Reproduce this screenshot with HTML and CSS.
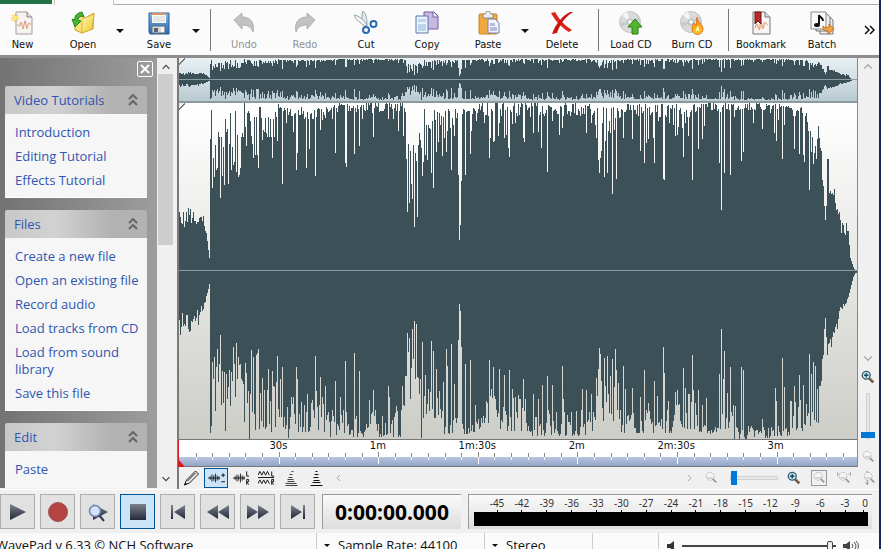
FILE: index.html
```html
<!DOCTYPE html>
<html lang="en">
<head>
<meta charset="utf-8">
<title>WavePad</title>
<link rel="stylesheet" href="styles.css">
</head>
<body>
<svg class="defs" aria-hidden="true">
  <defs>
    <linearGradient id="dark" x1="0" y1="0" x2="0" y2="1"><stop offset="0" stop-color="#7b808b"/><stop offset="1" stop-color="#23293a"/></linearGradient>
    <linearGradient id="gold" x1="0" y1="0" x2="1" y2="1"><stop offset="0" stop-color="#fffbb8"/><stop offset="1" stop-color="#eec42c"/></linearGradient>
    <linearGradient id="steel" x1="0" y1="0" x2="0" y2="1"><stop offset="0" stop-color="#7db4e8"/><stop offset="1" stop-color="#2b66b4"/></linearGradient>
    <linearGradient id="flame" x1="0" y1="0" x2="0" y2="1"><stop offset="0" stop-color="#ee8419"/><stop offset="1" stop-color="#ffc928"/></linearGradient>
    <symbol id="disc" viewBox="0 0 24 24"><circle cx="11" cy="11" r="10.5" fill="#d9dbda" stroke="#c2c4c4"/><path d="M11 11 3 4a11 11 0 0 1 5-3zM11 11l8 7a11 11 0 0 1-6 3z" fill="#f5f6f6"/><path d="M11 11 20 6l1 4zM11 11l-9 5-1-4z" fill="#c4c9c9"/><circle cx="11" cy="11" r="3.5" fill="#bfc2c2"/><circle cx="11" cy="11" r="1.8" fill="#fff"/></symbol>
    <symbol id="zoomin" viewBox="0 0 16 16"><path d="m9 9 5 5" stroke="#5d4b3c" stroke-width="3"/><path d="m10 9 4 4" stroke="#b99a70"/><circle cx="6" cy="6" r="4.5" fill="#c8e8f5" stroke="#3c596c" stroke-width="1.5"/><path d="M3.500 6h5M6 3.500v5" stroke="#19455e" stroke-width="1.5"/></symbol>
    <symbol id="zoomout" viewBox="0 0 16 16"><circle cx="7" cy="6" r="4.500" fill="#f4f4f4" stroke="#aaa" stroke-dasharray="2 1"/><path d="M4 8h6" stroke="#aaa"/><path d="m10 9 4 4" stroke="#999" stroke-width="2"/></symbol>
    <symbol id="wave" viewBox="0 0 14 12"><path d="M0 6h14M2.500 4v4M4.500 2v8M6.500 3v6M8.500 1v10M10.500 3v6M12.500 4v4" stroke="#111" fill="none"/></symbol>
  </defs>
</svg>
<div class="app">
  <header class="tabs"><span class="tab-file"></span><span class="tab-active"></span><span class="tab-rest"></span></header>

  <nav class="toolbar" aria-label="Main">
    <button class="tool first"><svg viewBox="0 0 24 24"><path d="M5 1h11l5 5v17H5z" fill="#f6f3f1" stroke="#a49d98"/><path d="M16 1v5h5" fill="#ddd" stroke="#888"/><path d="M6 14c2-1 2 3 3 0s1-5 2 0 1 5 2 0 1-6 2 0 1 4 2 0 2-1 3 0" fill="none" stroke="#d99370"/><path d="M4 3v8M0 7h8M1 4l6 6M7 4l-6 6" stroke="#efba2d"/><circle cx="4" cy="7" r="2" fill="#fff06a"/></svg>New</button>
    <button class="tool lead"><svg viewBox="0 0 24 24"><path d="M4 8 12 5l2 2 9-5-1 16-11 4-7-3z" fill="url(#gold)" stroke="#cba42b"/><path d="M11 8 23 3l-2 15-10 4z" fill="url(#gold)" stroke="#dbb43a"/><path d="M11 1C6 2 3 5 4 9L1 8l3 8 6-6-3-1c0-3 3-5 6-3z" fill="#46b62f" stroke="#29801f"/></svg>Open</button>
    <button class="drop" aria-label="Open options"></button>
    <button class="tool after"><svg viewBox="0 0 24 24"><path d="M2 2h20v21H3l-1-2z" fill="url(#steel)" stroke="#275e9f"/><path d="M5 2h14v10H5z" fill="#fbfbf8"/><path d="M5 2h14v2H5z" fill="#dd945e"/><path d="M6 6h12M6 8h12M6 10h12" stroke="#cdd1d4"/><path d="M5 15h13v7H5z" fill="#d7dad9" stroke="#5d6c78"/><path d="M7 17h4v4H7z" fill="#59636a"/><path d="M14 16h3v5h-3z" fill="#f5f6f5"/></svg>Save</button>
    <button class="drop" aria-label="Save options"></button>
    <span class="sep wide"></span>
    <button class="tool undo" disabled><svg viewBox="0 0 24 24"><path d="m2 9 8-7v4c8 0 13 5 11 15-2-5-5-7-11-7v4z" fill="#c2c2c2" stroke="#b0b0b0"/></svg>Undo</button>
    <button class="tool" disabled><svg viewBox="0 0 24 24"><path d="m22 9-8-7v4C6 6 1 11 3 21c2-5 5-7 11-7v4z" fill="#c2c2c2" stroke="#b0b0b0"/></svg>Redo</button>
    <button class="tool"><svg viewBox="0 0 24 24"><path d="M9 0c4 4 4 9 4 15l-2-1C8 10 7 5 9 0z" fill="#e4eaed" stroke="#91a1a9"/><path d="M0 4c4 0 10 5 13 10l-2 1C6 12 2 9 0 4z" fill="#f3f5f6" stroke="#91a1a9"/><circle cx="12" cy="19" r="3" fill="none" stroke="#286bb5" stroke-width="2"/><circle cx="19.500" cy="13" r="3" fill="none" stroke="#286bb5" stroke-width="2"/></svg>Cut</button>
    <button class="tool"><svg viewBox="0 0 24 24"><path d="M9 1h10l4 4v13H9z" fill="#c8b9e2" stroke="#6f5fa0"/><path d="M18 1v5h5" fill="#f4f0fb" stroke="#6f5fa0"/><path d="M1 5h12v17H1z" fill="#edf3fc" stroke="#5877ac"/><path d="M3 8h8v3H3zM3 13h8v7H3z" fill="#bdd4ed"/></svg>Copy</button>
    <button class="tool"><svg viewBox="0 0 24 24"><rect x="3" y="3" width="18" height="20" rx="1" fill="#efa93e" stroke="#c88429"/><path d="M7 3h2l2-3h2l2 3h2v4H7z" fill="#eee" stroke="#8b8b84"/><path d="M12 8h7l4 4v10H12z" fill="#f5f5ff" stroke="#7680ab"/><path d="M14 12h5v3h-5zM14 16h7v4h-7z" fill="#b7bbdf"/></svg>Paste</button>
    <button class="drop" aria-label="Paste options"></button>
    <button class="tool"><svg viewBox="0 0 24 24"><path d="M1 2 5 1c4 7 10 14 17 18l-3 2C12 17 6 11 1 2z" fill="#e22219"/><path d="M23 1C15 6 10 13 7 22l-5 1C5 14 12 5 20 1z" fill="#cc140e"/></svg>Delete</button>
    <span class="sep"></span>
    <button class="tool next"><svg viewBox="0 0 24 24"><use href="#disc"/><path d="m16 8 7 8h-4v7h-6v-7H9z" fill="#53b62a" stroke="#2c7d17"/></svg>Load CD</button>
    <button class="tool"><svg viewBox="0 0 24 24"><use href="#disc"/><path d="M17 6c0 5 6 7 6 12a5.500 5.500 0 0 1-11 0c0-3 1-5 2-6l2 3c1-3 0-6 1-9z" fill="url(#flame)" stroke="#de781c"/><path d="M18 14c0 2 2 3 1 6h-3c-1-2 1-3 2-6z" fill="#fff09a"/></svg>Burn CD</button>
    <span class="sep"></span>
    <button class="tool next"><svg viewBox="0 0 24 24"><path d="M4 1h12l5 5v17H4z" fill="#f7f6f5" stroke="#777"/><path d="M16 1v5h5" fill="#ddd" stroke="#777"/><path d="M6 17c2-6 2-5 3-1s2 4 2-1 2-4 2 0 2 3 2-1 2-2 4 0" fill="none" stroke="#e48650"/><path d="M6 1h6v12l-3-3-3 3z" fill="#b82d27" stroke="#6d1714"/></svg>Bookmark</button>
    <button class="tool"><svg viewBox="0 0 24 24"><path d="M10 6h10l3 3v14H10z" fill="#eee" stroke="#777"/><path d="M6 3h11l3 3v14H6z" fill="#eee" stroke="#777"/><path d="M1 1h15v17H1z" fill="#fafafa" stroke="#888"/><path d="M9 13V4c1 3 4 2 4 6" fill="none" stroke="#111" stroke-width="2"/><ellipse cx="7" cy="14" rx="3" ry="2" fill="#111"/><path d="M13 15c0 4 2 5 5 5v3l6-5-5-5v3c-2 1-4 1-6-1z" fill="#f3a248" stroke="#c66b20"/></svg>Batch</button>
    <button class="more" aria-label="More tools"><svg viewBox="0 0 12 10"><path d="m1 1 4 4-4 4M6 1l4 4-4 4" fill="none" stroke="#111" stroke-width="1.500"/></svg></button>
  </nav>

  <main class="work">
    <aside class="side">
      <div class="panels">
        <button class="close" aria-label="Close"><svg viewBox="0 0 10 10"><path d="m1 1 8 8M9 1 1 9" stroke="#fff" stroke-width="2"/></svg></button>
        <section><h2>Video Tutorials<svg viewBox="0 0 10 12"><path d="m1 5 4-4 4 4M1 11l4-4 4 4" /></svg></h2>
          <ul><li><a href="#">Introduction</a></li><li><a href="#">Editing Tutorial</a></li><li><a href="#">Effects Tutorial</a></li></ul></section>
        <section><h2>Files<svg viewBox="0 0 10 12"><path d="m1 5 4-4 4 4M1 11l4-4 4 4" /></svg></h2>
          <ul><li><a href="#">Create a new file</a></li><li><a href="#">Open an existing file</a></li><li><a href="#">Record audio</a></li><li><a href="#">Load tracks from CD</a></li><li><a href="#">Load from sound library</a></li><li><a href="#">Save this file</a></li></ul></section>
        <section><h2>Edit<svg viewBox="0 0 10 12"><path d="m1 5 4-4 4 4M1 11l4-4 4 4" /></svg></h2>
          <ul><li><a href="#">Paste</a></li></ul></section>
      </div>
      <div class="scroll"><svg viewBox="0 0 8 6"><path d="m1 5 3-3 3 3"/></svg><span class="thumb"></span><svg viewBox="0 0 8 6"><path d="m1 1 3 3 3-3"/></svg></div>
    </aside>

    <section class="editor">
      <div class="canvas">
        <div class="overview"><svg id="overview" viewBox="0 0 678 42" preserveAspectRatio="none"></svg><i class="corner"></i></div>
        <div class="track"><svg id="track" viewBox="0 0 678 336" preserveAspectRatio="none"></svg><i class="corner"></i></div>
        <div class="ruler">
          <div class="labels"><span>30s</span><span>1m</span><span>1m:30s</span><span>2m</span><span>2m:30s</span><span>3m</span></div>
          <svg id="ticks" viewBox="0 0 678 14" preserveAspectRatio="none"></svg>
          <i class="cursor"></i>
        </div>
      </div>
      <div class="vbar">
        <svg class="arrow" viewBox="0 0 8 6"><path d="m1 5 3-3 3 3"/></svg>
        <svg class="arrow down" viewBox="0 0 8 6"><path d="m1 1 3 3 3-3"/></svg>
        <button class="mini" aria-label="Zoom in vertically"><svg viewBox="0 0 16 16"><use href="#zoomin"/></svg></button>
        <input class="vslide" type="range" value="0" aria-label="Vertical zoom">
        <button class="mini" aria-label="Zoom out vertically"><svg viewBox="0 0 16 16"><use href="#zoomout"/></svg></button>
      </div>
      <div class="viewbar">
        <button class="view" aria-label="Edit tool"><svg viewBox="0 0 16 16"><path d="m1 15 2-5 9-9 3 3-9 9z" fill="#e9e9e9" stroke="#222"/><path d="m4 11 8-8M1 15l2-1-1-1z" stroke="#222"/></svg></button>
        <button class="view on" aria-label="Mixed waveform"><svg viewBox="0 0 18 14"><use href="#wave" y="1" width="13" height="12"/><path d="M14 4h4M16 2v4M14 11h4" stroke="#111"/></svg></button>
        <button class="view" aria-label="Left and right"><svg viewBox="0 0 18 16"><use href="#wave" y="2" width="13" height="12"/><path d="M14.500 1v5H17M14.500 15V9.500h2v2.500h-2l2 3" fill="none" stroke="#111"/></svg></button>
        <button class="view" aria-label="Split channels"><svg viewBox="0 0 18 16"><path d="m0 5 2-4 2 4 2-4 2 4 2-4 2 4M0 14l2-4 2 4 2-4 2 4 2-4 2 4M0 7.500h17M14.500 1v5H17M14.500 15V9.500h2v2.500h-2l2 3" fill="none" stroke="#111"/></svg></button>
        <button class="view" aria-label="Spectral view"><svg viewBox="0 0 14 16"><path d="M7 1.500h2M5 4.500h3M4 7.500h4M3 9.500h6M3 11.500h7M1 13.500h11M1 15.500h12" stroke="#444"/></svg></button>
        <button class="view" aria-label="Frequency view"><svg viewBox="0 0 14 16"><path d="M6 1.500h2M5 4.500h4M4 7.500h5M4 10.500h6M3 12.500h8M1 15.500h12" stroke="#111"/></svg></button>
        <svg class="arrow left" viewBox="0 0 6 8"><path d="M5 1 2 4l3 3"/></svg>
        <svg class="arrow right" viewBox="0 0 6 8"><path d="m1 1 3 3-3 3"/></svg>
        <button class="mini" aria-label="Zoom out"><svg viewBox="0 0 16 16"><use href="#zoomout"/></svg></button>
        <input class="hslide" type="range" value="0" aria-label="Horizontal zoom">
        <button class="mini" aria-label="Zoom in"><svg viewBox="0 0 16 16"><use href="#zoomin"/></svg></button>
        <button class="mini boxed" aria-label="Zoom to selection"><svg viewBox="0 0 16 16"><use href="#zoomout"/></svg></button>
        <button class="mini" aria-label="Full width"><svg viewBox="0 0 16 16"><path d="M.5 1v5M15.500 1v5M0 3.500h3M13 3.500h3" stroke="#aaa"/><use href="#zoomout"/></svg></button>
        <button class="mini" aria-label="Full height"><svg viewBox="0 0 16 16"><path d="M6 0v16M4 3l2-2 2 2M4 13l2 2 2-2" fill="none" stroke="#888"/><use href="#zoomout"/></svg></button>
      </div>
    </section>
  </main>

  <section class="transport">
    <button class="play" aria-label="Play"><svg viewBox="0 0 24 24"><path d="m4 4 16 8-16 8z"/></svg></button>
    <button class="play" aria-label="Record"><svg viewBox="0 0 24 24"><circle cx="12" cy="12" r="9.500" fill="#b34441" stroke="#9b5553"/></svg></button>
    <button class="play" aria-label="Scrub"><svg viewBox="0 0 24 24"><path d="m7 4 15 8-15 8z"/><path d="m13 15 5 6" stroke="#30384b" stroke-width="2"/><circle cx="9" cy="11" r="5.500" fill="#d4e1fa" stroke="#7182ae" stroke-width="1.500"/></svg></button>
    <button class="play active" aria-label="Stop"><svg viewBox="0 0 24 24"><path d="M4 4h16v16H4z"/></svg></button>
    <button class="play" aria-label="Go to start"><svg viewBox="0 0 24 24"><path d="M5 5h2v14H5zM19 5v14L8 12z"/></svg></button>
    <button class="play" aria-label="Rewind"><svg viewBox="0 0 24 24"><path d="M12 5v14L1 12zM23 5v14l-11-7z"/></svg></button>
    <button class="play" aria-label="Fast forward"><svg viewBox="0 0 24 24"><path d="m1 5 11 7-11 7zM12 5l11 7-11 7z"/></svg></button>
    <button class="play" aria-label="Go to end"><svg viewBox="0 0 24 24"><path d="m5 5 11 7-11 7zM17 5h2v14h-2z"/></svg></button>
    <output class="time">0:00:00.000</output>
    <div class="meter">
      <div class="db"><span>-45</span><span>-42</span><span>-39</span><span>-36</span><span>-33</span><span>-30</span><span>-27</span><span>-24</span><span>-21</span><span>-18</span><span>-15</span><span>-12</span><span>-9</span><span>-6</span><span>-3</span><span>0</span></div>
      <div class="level"></div>
    </div>
  </section>

  <footer class="status">
    <span class="product">WavePad v 6.33 © NCH Software</span>
    <button class="pick rate">Sample Rate: 44100</button>
    <button class="pick chan">Stereo</button>
    <span class="blank"></span>
    <div class="volume">
      <svg viewBox="0 0 10 10"><path d="M1 3h3l4-3v10L4 7H1z" fill="#333"/></svg>
      <input type="range" value="98" aria-label="Volume">
      <svg class="loud" viewBox="0 0 18 12"><path d="M1 4h3l4-3v10L4 8H1z" fill="#444"/><path d="M10 4q2 2 0 4M12 2q4 4 0 8M14 1q5 5 0 10" fill="none" stroke="#555"/></svg>
    </div>
  </footer>
</div>
<script src="wave.js"></script>
</body>
</html>
```
FILE: styles.css
```css
* { box-sizing: border-box; }
body { margin: 0; height: 100vh; overflow: hidden; font-family: "Noto Sans", sans-serif; font-size: 12px; color: #111; background: #f0f0f0; }
button { font: inherit; color: inherit; border: 0; padding: 0; background: none; }
svg { display: block; }
.defs { position: absolute; width: 0; height: 0; }
.app { height: calc(100vh + 9px); display: flex; flex-direction: column; border-right: 2px solid #142a5c; }

.tabs { display: flex; height: 5px; background: #fbfbfb; }
.tab-file { width: 52px; margin-bottom: 1px; background: #217346; }
.tab-active { width: 60px; margin-left: 2px; border: solid #c4c4c4; border-width: 0 1px; }
.tab-rest { flex: 1; border-bottom: 1px solid #a9a9a9; }

.toolbar { display: flex; gap: 1px; height: 50px; background: #fbfbfb; }
.tool { flex: none; width: 60px; display: flex; flex-direction: column; align-items: center; gap: 2px; padding-top: 6px; font-family: "DejaVu Sans Condensed", "Noto Sans", sans-serif; font-size: 11px; line-height: 16px; white-space: nowrap; }
.tool svg { width: 24px; height: 24px; }
.tool:disabled { color: #929292; }
.first { width: 45px; }
.lead { margin-left: 7px; }
.after, .undo { margin-left: 2px; }
.next { margin-left: 1px; }
.drop { width: 12px; display: grid; place-items: center; padding-top: 2px; }
.drop::before { content: ""; border: 4px solid transparent; border-top-color: #111; border-bottom: 0; }
.sep { width: 1px; margin: 4px 0 4px 5px; background: #777; }
.sep.wide { margin-left: 7px; }
.more { margin-left: auto; padding-right: 3px; }
.more svg { width: 12px; height: 10px; }

.work { flex: 1; min-height: 0; display: flex; border-top: 3px solid #8e8e8e; }
.side { width: 174px; display: flex; overflow: hidden; margin-bottom: 1px; }
.panels { flex: 1; display: flex; flex-direction: column; gap: 12px; padding: 3px 10px 0 5px; background: linear-gradient(90deg, #737373, #9d9d9d); overflow: hidden; }
.close { align-self: flex-end; flex: none; width: 16px; height: 16px; margin: 0 -6px -3px 0; border: 1px solid #fff; border-radius: 2px; display: grid; place-items: center; }
.close svg { width: 10px; height: 10px; }
.panels section { font-family: "Open Sans", "Noto Sans", sans-serif; font-size: 13px; }
.panels h2 { margin: 0; height: 28px; padding: 0 9px; display: flex; align-items: center; justify-content: space-between; font-size: 13px; font-weight: 400; color: #2f55b0; background: linear-gradient(90deg, #c8c8c8, #d2d2d2 35%, #b2b2b2 75%); border-radius: 2px 2px 0 0; }
.panels h2 svg { width: 10px; height: 12px; fill: none; stroke: #666; stroke-width: 2; }
.panels ul { margin: 0; padding: 10px 0 8px 10px; list-style: none; display: flex; flex-direction: column; gap: 7px; background: #f6f6f6; line-height: 17px; border-bottom: 1px solid #fff; }
.panels section:last-child ul { height: 60px; }
.panels a { color: #2f55b0; text-decoration: none; }
.scroll { width: 17px; padding: 5px 1px; display: flex; flex-direction: column; align-items: center; background: #f0f0f0; }
.scroll svg { width: 10px; height: 7px; fill: none; stroke: #444; stroke-width: 1; }
.scroll .thumb { width: 15px; height: 171px; margin: 4px 0 auto; background: #cdcdcd; }

.editor { flex: 1; min-width: 0; margin-left: 3px; display: grid; grid-template: minmax(0, 1fr) 22px / minmax(0, 1fr) 21px; border-left: 2px solid #7a7a7a; }
.canvas { grid-area: 1 / 1; display: flex; flex-direction: column; border-right: 1px solid #888; }
.overview { position: relative; height: 45px; padding-top: 1px; background: linear-gradient(#e9f1f4, #b9cad1); border-bottom: 2px solid #8b9a9f; }
.track { position: relative; flex: 1; min-height: 0; background: linear-gradient(#fff, #cdcdc8); border-bottom: 1px solid #777; }
.overview svg, .track svg { width: 100%; height: 100%; }
.corner { position: absolute; left: 0; top: 0; width: 6px; height: 7px; background: linear-gradient(135deg, #eee 45%, #777 45% 60%, transparent 60%); }
.ruler { position: relative; height: 27px; background: linear-gradient(#fff 17px, #b8c5de 17px, #93a5c8); border-bottom: 1px solid #777; }
.labels { display: grid; grid-template-columns: repeat(6, 44fr) 14fr; padding-left: 7.330%; font: 10px/12px "DejaVu Sans", sans-serif; }
.labels span { text-align: center; }
.ruler svg { width: 100%; height: 14px; }
.cursor { position: absolute; left: -1px; top: 0; width: 7px; height: 27px; background: #dd1620; clip-path: polygon(0 0, 1px 0, 1px 20px, 7px 27px, 0 27px); }

.arrow { width: 10px; height: 8px; fill: none; stroke: #aaa; stroke-width: 1; }
.vbar { grid-area: 1 / 2; display: flex; flex-direction: column; align-items: center; padding: 4px 2px 2px 0; }
.down { margin-top: auto; margin-bottom: 6px; }
.mini { flex: none; width: 16px; height: 16px; }
.mini svg { width: 14px; height: 14px; margin: auto; }
.boxed { border: 1px solid #999; }
input[type=range] { appearance: none; margin: 0; background: none; }
input.vslide { writing-mode: vertical-lr; direction: rtl; width: 15px; height: 46px; margin: 8px 0 10px; }
.vslide::-webkit-slider-runnable-track { width: 4px; height: 100%; margin: 0 auto; border: 1px solid #d0d0d0; background: #e7e7e7; }
.vslide::-webkit-slider-thumb { appearance: none; width: 14px; height: 6px; margin-left: -6px; background: #0078d7; }
.viewbar { grid-area: 2 / 1 / 3 / 3; display: flex; align-items: center; gap: 1px; padding: 0 2px 0 0; }
.view { width: 24px; height: 20px; display: grid; place-items: center; border: 1px solid transparent; }
.view svg { width: 17px; height: 16px; }
.on { background: #cce4f7; border-color: #005499; }
.left { margin-left: 4px; }
.right { margin-left: auto; margin-right: 7px; }
input.hslide { width: 48px; height: 15px; margin: 0 7px 0 10px; }
.hslide::-webkit-slider-runnable-track { height: 4px; border: 1px solid #d0d0d0; background: #e7e7e7; }
.hslide::-webkit-slider-thumb { appearance: none; width: 6px; height: 14px; margin-top: -6px; background: #0078d7; }
.viewbar .mini + .mini { margin-left: 8px; }

.transport { display: flex; gap: 5px; height: 43px; padding: 4px 7px 4px 0; border-top: 1px solid #fff; }
.play { flex: none; width: 35px; height: 35px; display: grid; place-items: center; background: #e1e1e1; border: 1px solid #adadad; }
.play svg { width: 24px; height: 24px; fill: url(#dark); }
.active { background: #cce4f7; border-color: #005499; }
.time { flex: none; width: 139px; height: 35px; margin: 0 2px; text-align: center; font-size: 21px; line-height: 34px; font-weight: 700; color: #000; background: linear-gradient(#fafafa, #ddd); border: solid #999; border-width: 1px 0 0 1px; }
.meter { flex: 1; height: 35px; padding: 2px 4px 0 5px; background: linear-gradient(#fafafa, #ddd); border: solid #999; border-width: 1px 0 0 1px; }
.db { display: flex; justify-content: space-between; padding-left: 13px; font-size: 10px; line-height: 12px; color: #333; }
.db span { width: 20px; text-align: center; }
.db span::after { content: ""; display: block; width: 1px; height: 2px; margin: 1px auto 0; background: #000; }
.db span:last-child { width: 8px; text-align: right; }
.level { height: 14px; background: #000; }

.status { display: flex; align-items: stretch; height: 26px; line-height: 25px; font-family: "Open Sans", "Noto Sans", sans-serif; font-size: 13px; background: #fafafa; border-top: 1px solid #eee; }
.product { width: 317px; text-indent: -4px; border-right: 1px solid #ccc; white-space: nowrap; }
.pick { display: flex; align-items: center; gap: 8px; padding-left: 7px; border-right: 1px solid #ccc; white-space: nowrap; }
.pick::before { content: ""; border: 3px solid transparent; border-top-color: #111; border-bottom: 0; }
.rate { width: 168px; }
.chan { width: 108px; }
.blank { width: 66px; border-right: 1px solid #ccc; }
.volume { flex: 1; display: flex; align-items: center; gap: 6px; padding: 0 19px 0 7px; }
.volume svg { flex: none; width: 10px; height: 10px; }
.volume .loud { width: 18px; height: 12px; }
.volume input { flex: 1; min-width: 0; height: 12px; }
.volume input::-webkit-slider-runnable-track { height: 2px; background: #444; }
.volume input::-webkit-slider-thumb { appearance: none; width: 6px; height: 10px; margin-top: -4px; background: #eee; border: 1px solid #444; border-radius: 2px; }
```
FILE: wave.js
```js
// Silence gap between the waveform and each edge, one value per column.
// "floor" entries are [from, to, low, high]; "peaks" are column:depth pairs.
const COLS = 678;
let seed = 7;
function rnd() {
  seed = (seed * 16807) % 2147483647;
  return seed / 2147483647;
}
function build(floors, head, peaks) {
  const out = new Array(COLS).fill(0);
  for (const [a, b, lo, hi] of floors) {
    for (let i = a; i < b && i < COLS; i++) out[i] = Math.round(lo + (hi - lo) * Math.pow(rnd(), 1.7));
  }
  head.forEach((v, i) => { out[i] = v; });
  peaks.trim().split(/\s+/).forEach(p => {
    const [x, d] = p.split(":").map(Number);
    out[x - 179] = d;
  });
  return out;
}

const top_ = build(
  [[105, 155, 4, 18], [155, 227, 0, 10], [227, 245, 40, 62], [245, 285, 5, 26], [285, 300, 5, 14], [300, 415, 0, 14], [415, 440, 4, 30], [440, 525, 1, 15], [525, 610, 0, 9], [610, 628, 4, 24]],
  [109, 114, 120, 121, 109, 124, 118, 109, 119, 105, 112, 106, 120, 115, 109, 118, 118, 121, 119, 119, 115, 114, 114, 118, 113, 123, 128, 130, 138, 147, 155,
   36, 7, 85, 55, 74, 42, 67, 65, 29, 34, 95, 34, 73, 44, 82, 16, 29, 26, 81, 41, 10, 67, 44, 62, 59, 8, 69, 32, 74, 72, 65, 34, 30, 34, 0, 24, 43, 10, 8, 10, 18, 33, 41, 55, 14, 52, 14, 52, 65, 4, 4, 15, 37, 27, 29, 15, 30, 34, 14, 34, 16, 34, 55, 16, 34, 9, 14, 38, 1, 5, 4, 5, 81, 8, 5, 7, 20],
  `293:29 296:67 297:50 306:65 309:46 315:73 320:27 335:50 345:60 346:64 354:51 359:43 362:16 373:34 388:16 393:16 398:28 403:33
   406:56 407:109 409:100 411:81 412:96 414:124 415:50 416:58 417:114 418:42 419:30 420:37 421:45 422:73 425:52 427:57 429:25 431:70 433:85 436:49 438:39 442:53 444:35 446:49 447:28 451:67 454:33
   457:10 458:72 459:137 460:122 461:78 465:72 470:51 471:28 476:18 484:20 487:0 489:55 490:35 493:39 494:38 498:33 499:20 504:35 506:32 508:45 509:54 512:21 515:20 523:35 524:39 533:30 538:29 541:45 547:69 552:18 559:32 562:25 577:12 580:13 586:30 591:20
   595:22 596:35 598:57 599:70 600:55 601:48 602:20 604:74 605:38 607:70 610:30 612:91 614:27 616:76 619:15 623:35 632:36 640:48 644:60 646:40 648:36 653:35 654:60 658:18 663:76 664:77 669:20 673:22 675:33 677:32 678:24 682:25 683:54 685:20 688:33 692:77 698:46 702:36 704:23
   719:60 721:107 724:70 730:72 734:14 741:58 743:49 753:20 762:26 770:10 774:30 776:38 778:17 782:56 784:22 794:46 799:51 803:52 804:59 806:10 807:19 808:28 809:87 810:28 811:49 812:34 813:61 814:50 815:43 816:56 817:36 818:23 819:35 820:45 821:48 822:77 823:83 824:103 825:117 826:103 827:56 828:56 829:90 830:88 831:91 832:90 833:92 834:86 835:100 836:107 837:106 838:111 839:109 840:117 841:130 842:120 843:122 844:130 845:132 846:120 847:128 848:128 849:142 850:155 851:158 852:161 853:164 854:166 855:167 856:167`
);

const bottom = build(
  [[105, 125, 7, 35], [125, 150, 7, 45], [150, 224, 2, 30], [224, 235, 30, 70], [235, 265, 20, 48], [265, 300, 5, 24], [300, 350, 8, 45], [350, 414, 3, 30], [414, 442, 18, 55], [442, 495, 6, 30], [495, 520, 10, 42], [520, 538, 5, 15], [538, 555, 10, 36], [555, 595, 0, 15], [595, 611, 3, 20], [611, 645, 8, 40]],
  [119, 104, 112, 126, 113, 115, 113, 124, 124, 110, 107, 108, 118, 117, 120, 123, 118, 121, 129, 114, 124, 127, 133, 128, 130, 136, 137, 143, 146, 150, 155,
   6, 13, 77, 60, 82, 28, 72, 90, 57, 75, 104, 34, 68, 36, 67, 8, 65, 40, 52, 69, 33, 67, 58, 92, 75, 42, 96, 60, 82, 74, 75, 60, 58, 55, 17, 76, 66, 36, 48, 0, 45, 89, 27, 82, 25, 9, 84, 86, 90, 10, 46, 18, 61, 12, 49, 10, 12, 49, 70, 15, 38, 7, 68, 53, 52, 12, 57, 83, 30, 22, 60, 22, 72, 12, 22, 10, 14, 32, 1, 10, 22, 42, 35, 42, 25, 15, 72, 60, 7, 25, 12, 37, 7, 12, 34, 7, 27],
  `315:83 316:48 320:62 323:35 325:53 335:58 340:42 345:78 354:86 359:68 369:39 373:49 388:53 389:42 396:33 402:53 404:33 405:63 406:63 407:106 408:87 409:101 410:40 411:71 412:110 413:80 414:118 415:60 416:115 417:62 418:61 420:60 421:1 422:97 425:64 428:50 431:98 433:88 436:70 443:57 446:90 447:73 451:95 454:55 458:99 459:135 460:128 461:92 465:75 470:79 475:34 489:79 491:50 493:72 499:70
   504:64 509:69 512:50 518:44 523:60 525:40 533:45 538:40 542:54 547:63 552:54 556:27 562:73 563:40 567:24 576:28 582:50 586:49 591:45 596:61 598:70 599:91 600:85 601:58 604:81 607:83 610:63 612:80 614:52 615:90 616:69 618:56 623:73 625:50 632:51 640:42 644:69 648:36 654:58 657:43 663:92 664:66 668:38 675:47 677:49 683:71 685:51 688:45 689:45 692:84 693:49 698:49 702:34 706:41 719:65 721:110 723:60 724:88 727:46 730:72 735:33 741:72 743:69 762:20 775:51 776:38 782:81 784:52 791:38 794:53 799:64 803:54 809:85 811:65 813:77 815:73 817:50 818:16 819:53 820:53 821:58 822:80 823:84 824:110 825:121 826:102 827:84 828:95 829:96 830:100 831:92 832:102 833:107 834:106 835:112 836:115 837:110 838:120 839:128 840:132 841:131 842:130 843:135 844:133 845:135 846:136 847:140 848:142 849:146 850:150 851:154 852:158 853:162 854:164 855:166 856:166`
);

function shape(height, mid, scale, pad) {
  let d = "";
  for (let i = 0; i < COLS; i++) {
    const a = Math.min(mid, Math.round(top_[i] * scale));
    const b = Math.max(mid, height - pad - Math.round(bottom[i] * scale));
    d += `M${i} ${a}h1V${b}h-1z`;
  }
  return `<path d="${d}" fill="#3b5157" shape-rendering="crispEdges"/><path d="M0 ${mid}.5h${COLS}" stroke="#899da2"/>`;
}
document.getElementById("track").innerHTML = shape(336, 167, 1, 0);
document.getElementById("overview").innerHTML = shape(42, 20, 0.125, 1);

// Ruler: a tick every five seconds, a long one every thirty.
let dark = "", light = "";
for (let n = 1; n <= 40; n++) {
  const x = Math.round(n * 16.6) + 0.5;
  const long = n % 6 === 0;
  dark += `M${x} ${long ? 0 : 1}V5`;
  light += `M${x} 5V${long ? 12 : 8}`;
}
document.getElementById("ticks").innerHTML = `<path d="${dark}" stroke="#888"/><path d="${light}" stroke="#fff"/>`;
```
